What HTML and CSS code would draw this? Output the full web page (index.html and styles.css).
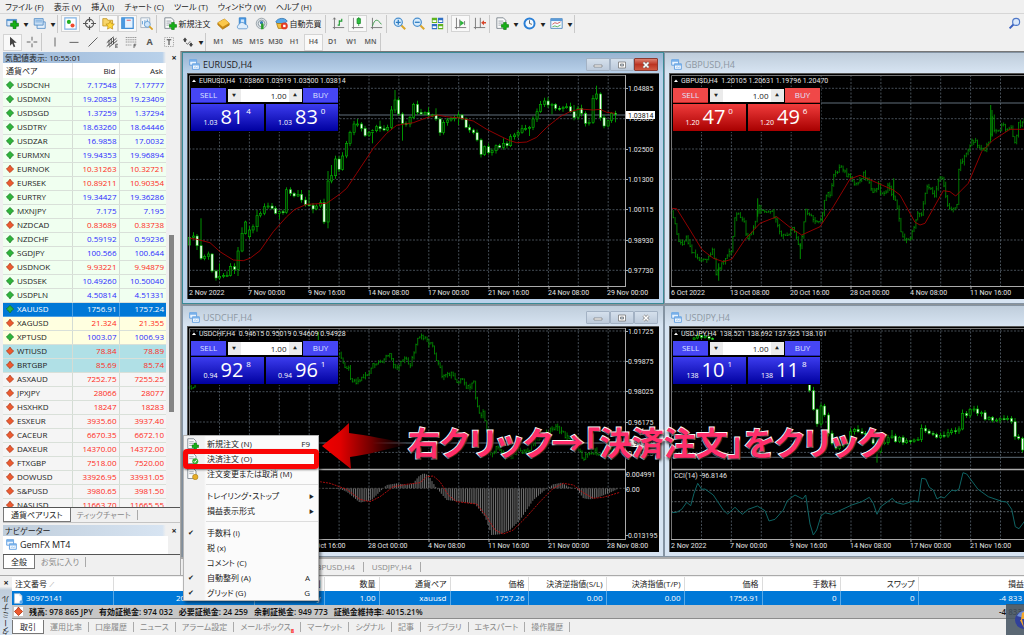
FILE: index.html
```html
<!DOCTYPE html>
<html lang="ja">
<head>
<meta charset="utf-8">
<title>GemFX MT4</title>
<link rel="stylesheet" href="styles.css">
</head>
<body>
<svg class="defs" aria-hidden="true">
  <defs>
    <linearGradient id="g-arrow" x1="0" x2="1" y1="0" y2="0"><stop offset="0" stop-color="#f00000"/><stop offset=".22" stop-color="#e00000"/><stop offset=".6" stop-color="#6c0000"/><stop offset="1" stop-color="#200" stop-opacity=".2"/></linearGradient>
    <symbol id="plus" viewBox="0 0 8 8"><path d="M2.7.5h2.6v2.2h2.2v2.6H5.3v2.2H2.7V5.3H.5V2.7h2.2z" fill="#16b016" stroke="#0a760a" stroke-width=".6"/></symbol>
    <symbol id="i-newchart" viewBox="0 0 16 16"><path d="M1 3h12v8H1z" fill="#dcebfa" stroke="#3a78b8"/><path d="M1 3h12v2H1z" fill="#5b9bd8"/><use href="#plus" x="5" y="4" width="11" height="11"/></symbol>
    <symbol id="i-profiles" viewBox="0 0 16 16"><path d="M5 6h10v8H5z" fill="#e6f1fc" stroke="#4b88c4"/><path d="M1.500 2h11v8h-11z" fill="#c8def4" stroke="#4b88c4"/><path d="M3 4h8M3 6h8" stroke="#6fa4d8"/></symbol>
    <symbol id="i-watch" viewBox="0 0 16 16"><path d="M1 1h14v14H1z" fill="#fff" stroke="#7fb2e4" stroke-width="1.400"/><circle cx="6" cy="6" r="2.500" fill="#22b022"/><circle cx="10.500" cy="10.500" r="2.500" fill="#ef4a2e"/></symbol>
    <symbol id="i-target" viewBox="0 0 16 16"><circle cx="8" cy="8" r="5" fill="none" stroke="#555" stroke-width="1.400"/><path d="M8 0v6M8 10v6M0 8h6M10 8h6" stroke="#555" stroke-width="1.400"/></symbol>
    <symbol id="i-nav" viewBox="0 0 16 16"><path d="M1 2h5l1 2h6v7H1z" fill="#f7d56a" stroke="#c49520"/><path d="M10 5l1.600 3.300 3.600.5-2.600 2.500.6 3.600L10 13.200 6.800 14.900l.6-3.600L4.800 8.800l3.600-.5z" fill="#ffd83c" stroke="#b98a10" stroke-width=".8"/></symbol>
    <symbol id="i-panel" viewBox="0 0 16 16"><path d="M1 1h14v13H1z" fill="#e5f2ff" stroke="#3f8dd6" stroke-width="1.500"/><path d="M1 1h4v13H1z" fill="#4a98e0"/><path d="M7 4h5" stroke="#e03c3c"/></symbol>
    <symbol id="i-tester" viewBox="0 0 16 16"><path d="M1 1h11v12H1z" fill="#f2f6fa" stroke="#9aa8b8"/><path d="M3 9V5M6 11V4M9 8V3" stroke="#4a90d0"/><circle cx="9" cy="9" r="3.600" fill="#cfe6fb" stroke="#5a96cc"/><path d="M11.500 11.500l4 4" stroke="#d8a020" stroke-width="2"/></symbol>
    <symbol id="i-order" viewBox="0 0 16 16"><path d="M1 1h8l3 3v10H1z" fill="#fbfbfb" stroke="#6c7680"/><path d="M3 5h6M3 7.500h6M3 10h4" stroke="#8a949e"/><use href="#plus" x="6" y="6" width="10" height="10"/></symbol>
    <symbol id="i-close" viewBox="0 0 16 16"><path d="M1 1h8l3 3v10H1z" fill="#fbfbfb" stroke="#6c7680"/><path d="M3 5h6M3 7.500h6" stroke="#8a949e"/><circle cx="11" cy="11" r="4" fill="#35b035"/><path d="M9 11l1.500 1.600L13.200 9" stroke="#fff" fill="none" stroke-width="1.300"/></symbol>
    <symbol id="i-modify" viewBox="0 0 16 16"><path d="M1 1h8l3 3v10H1z" fill="#fbfbfb" stroke="#6c7680"/><path d="M3 5h6M3 7.500h6" stroke="#8a949e"/><circle cx="11" cy="12" r="3.600" fill="#e8ae28" stroke="#9c7210" stroke-width=".7"/></symbol>
    <symbol id="i-gold" viewBox="0 0 16 16"><path d="M1 7l8-4.500 6 5v2.500l-8 5-6-5.500z" fill="#c98a14" stroke="#a9720c" stroke-width=".8"/><path d="M1 7l8-4.500 6 5L7 12z" fill="#fbc84c"/></symbol>
    <symbol id="i-cloud" viewBox="0 0 16 16"><path d="M4 1h8v8H4z" fill="#4a9be8" stroke="#2f7bc4"/><path d="M6 3h4v4H6z" fill="#cfe6fb"/><path d="M3 14.500a2.800 2.800 0 01.5-5A4 4 0 0111 9a3 3 0 012 5.500z" fill="#dfeefc" stroke="#5b94cc"/></symbol>
    <symbol id="i-signal" viewBox="0 0 16 16"><circle cx="8" cy="8" r="6.500" fill="#d8dde2" stroke="#8d979f"/><circle cx="8" cy="8" r="4" fill="#eef1f3" stroke="#7c8c94"/><circle cx="8" cy="7" r="2" fill="#3878b0"/><path d="M9 8v7" stroke="#28a028" stroke-width="3"/></symbol>
    <symbol id="i-auto" viewBox="0 0 16 16"><path d="M1 6c2-5 11-6 14-1l-3 3H3z" fill="#58a8e8" stroke="#2c70ac"/><path d="M2 8l2 6h8V8z" fill="#f2c040" stroke="#a97c12"/><circle cx="11.500" cy="11" r="4.200" fill="#e23a22"/><path d="M10 9.500h3v3h-3z" fill="#fff"/></symbol>
    <symbol id="i-bars" viewBox="0 0 16 16"><path d="M3 1v12h12M1 13h2M3 13v2M1.500 3L3 1l1.500 2" fill="none" stroke="#666"/><path d="M7 10h2V4M9 5h3V2" stroke="#1c9a2c" stroke-width="1.400" fill="none"/></symbol>
    <symbol id="i-candle" viewBox="0 0 16 16"><path d="M3 1v12h12M1 13h2M3 13v2" fill="none" stroke="#666"/><path d="M9.500 0v11" stroke="#1c9a2c"/><path d="M7.500 2h4v6h-4z" fill="#2fc23f" stroke="#148a24"/></symbol>
    <symbol id="i-line" viewBox="0 0 16 16"><path d="M3 1v12h12M1 13h2M3 13v2" fill="none" stroke="#666"/><path d="M3 11c3-9 6-9 11-2" fill="none" stroke="#3d9a4a" stroke-width="1.200"/></symbol>
    <symbol id="i-zin" viewBox="0 0 16 16"><path d="M10 10l5 5" stroke="#dba62a" stroke-width="2.600"/><circle cx="6.500" cy="6.500" r="5" fill="#d7ecfc" stroke="#4a8fce" stroke-width="1.500"/><path d="M6.500 3.500v6M3.500 6.500h6" stroke="#2f7cc0" stroke-width="1.600"/></symbol>
    <symbol id="i-zout" viewBox="0 0 16 16"><path d="M10 10l5 5" stroke="#dba62a" stroke-width="2.600"/><circle cx="6.500" cy="6.500" r="5" fill="#d7ecfc" stroke="#4a8fce" stroke-width="1.500"/><path d="M3.500 6.500h6" stroke="#2f7cc0" stroke-width="1.600"/></symbol>
    <symbol id="i-tile" viewBox="0 0 16 16"><path d="M1 1h6.500v6.500H1zM8.500 8.500H15V15H8.500z" fill="#5fb420"/><path d="M8.500 1H15v6.500H8.500zM1 8.500h6.500V15H1z" fill="#2f6fc4"/><path d="M2 4h4.500v2H2zM9.500 4H14v2H9.500zM2 11.500h4.500v2H2zM9.500 11.500H14v2H9.500z" fill="#fff"/></symbol>
    <symbol id="i-shift" viewBox="0 0 16 16"><path d="M3 1v12h12M1 13h2M3 13v2" fill="none" stroke="#666"/><path d="M7 3v9M13 5v5" stroke="#666"/><path d="M7.500 4l5 3.500-5 3.500z" fill="#2bb03a"/></symbol>
    <symbol id="i-scroll" viewBox="0 0 16 16"><path d="M3 1v12h12M1 13h2M3 13v2M9 1v12" fill="none" stroke="#666"/><path d="M10 7l3.500-3v2H16v2h-2.500v2z" fill="#d8452a"/></symbol>
    <symbol id="i-clock" viewBox="0 0 16 16"><circle cx="8" cy="8" r="6.200" fill="#f4faff" stroke="#2a7fd6" stroke-width="2.400"/><path d="M8 4v4l3 1" stroke="#444" fill="none"/></symbol>
    <symbol id="i-tmpl" viewBox="0 0 16 16"><path d="M1 2h14v12H1z" fill="#f5faff" stroke="#3f7db8"/><path d="M1 2h14v3H1z" fill="#5b9bd8"/><path d="M3 9l3-2 3 1 4-2" stroke="#c44" fill="none"/><path d="M3 12l3-1 3 1 4-2" stroke="#4a4" fill="none"/></symbol>
    <symbol id="i-cursor" viewBox="0 0 16 16"><path d="M4 1v12l3-3 2 5 2-1-2-5h4z" fill="#444"/></symbol>
    <symbol id="i-cross" viewBox="0 0 16 16"><path d="M8 1v5M8 10v5M1 8h5M10 8h5" stroke="#555" stroke-width="1.200"/></symbol>
    <symbol id="i-vline" viewBox="0 0 16 16"><path d="M8 2v12" stroke="#555" stroke-width="1.200"/></symbol>
    <symbol id="i-h" viewBox="0 0 16 16"><path d="M2 8.500h12" stroke="#555" stroke-width="1.200"/></symbol>
    <symbol id="i-d" viewBox="0 0 16 16"><path d="M2 14L14 2" stroke="#555" stroke-width="1.200"/></symbol>
    <symbol id="i-ch" viewBox="0 0 16 16"><path d="M1 9L10 1M1 14L14 3M4 15L15 6M4 5v8M7 3v8M10 2v9" stroke="#444" stroke-width="1.200"/><path d="M16 11h-3v5h3M13 13.500h2.500" stroke="#444" fill="none"/></symbol>
    <symbol id="i-fib" viewBox="0 0 16 16"><path d="M1 2h14M1 5h14M1 8h14M1 12h8" stroke="#666" stroke-dasharray="1.500 1"/><path d="M15 11h-3v5M12 13h2.500" stroke="#444" fill="none"/></symbol>
    <symbol id="i-label" viewBox="0 0 16 16"><path d="M2 2h12v12H2z" fill="none" stroke="#888" stroke-dasharray="1.500 1.500"/><path d="M5 5h6M8 5v7" stroke="#444" stroke-width="1.400"/></symbol>
    <symbol id="i-arrows" viewBox="0 0 16 16"><path d="M4 2l3 3.500H5.500L5 8H3L2.500 5.500H1z" fill="#444"/><path d="M5 9l2.500 2L11 7" fill="none" stroke="#444"/><path d="M11 9h2l.5 2H15l-3 3.500L9 11h1.500z" fill="#444"/></symbol>
    <symbol id="i-find" viewBox="0 0 16 16"><path d="M7 9l-5 5" stroke="#3a5fc0" stroke-width="2.400"/><circle cx="10" cy="6" r="4.300" fill="#dbe9fb" stroke="#4f78c8" stroke-width="1.400"/></symbol>
    <symbol id="i-win" viewBox="0 0 16 16"><path d="M1 1h10v8H1z" fill="#eaf4ff" stroke="#5a9be0" stroke-width="1.300"/><path d="M1 1h10v3H1z" fill="#78b0ea"/><path d="M5 7h10v8H5z" fill="#f6fbff" stroke="#5a9be0" stroke-width="1.300"/><path d="M5 7h10v2.500H5z" fill="#78b0ea"/><path d="M7 12.500l2-1 2 1 2-1" fill="none" stroke="#78b0ea"/></symbol>
    <symbol id="i-up" viewBox="0 0 10 10"><path d="M5 .5L9.500 5 7.500 7H7L5.500 9.500h-1L3 7h-.5L.5 5z" fill="#2db53a" stroke="#12711c" stroke-width=".9"/></symbol>
    <symbol id="i-dn" viewBox="0 0 10 10"><path d="M5 9.500L9.500 5 7.500 3H7L5.500.5h-1L3 3h-.5L.5 5z" fill="#ec5a30" stroke="#a8300f" stroke-width=".9"/></symbol>
    <symbol id="i-doc" viewBox="0 0 16 16"><path d="M2 1h8l3 3v11H2z" fill="#fff" stroke="#b8c6d4"/><path d="M10 1v3h3" fill="none" stroke="#b8c6d4"/><circle cx="12" cy="13" r="2.500" fill="#5aa8ec"/></symbol>
  </defs>
</svg>

<nav class="menubar">
  <button>ファイル (F)</button><button>表示 (V)</button><button>挿入(I)</button><button>チャート (C)</button><button>ツール (T)</button><button>ウィンドウ (W)</button><button>ヘルプ (H)</button>
</nav>
<div class="toolrow" id="bar1"></div>
<div class="toolrow second" id="bar2"></div>

<main class="work">
  <aside class="side">
    <section class="watch">
      <div class="pane-title"><span>気配値表示: 10:55:01</span><button aria-label="閉じる">×</button></div>
      <div class="watch-body">
        <table class="quotes">
          <thead><tr><th>通貨ペア</th><th>Bid</th><th>Ask</th></tr></thead>
          <tbody id="quotes"></tbody>
        </table>
        <div class="scroll"><div class="thumb"></div></div>
      </div>
      <div class="tabs"><button class="on">通貨ペアリスト</button><button>ティックチャート</button></div>
    </section>
    <section class="navi">
      <div class="pane-title pale"><span>ナビゲーター</span><button aria-label="閉じる">×</button></div>
      <div class="tree"><svg class="ic"><use href="#i-win"/></svg><span>GemFX MT4</span></div>
      <div class="tabs"><button class="on">全般</button><button>お気に入り</button></div>
    </section>
  </aside>
  <section class="mdi">
    <div class="windows" id="windows"></div>
    <div class="charttabs"><button>EURUSD,H4</button><button>USDCHF,H4</button><button>GBPUSD,H4</button><button>USDJPY,H4</button></div>
  </section>
</main>

<section class="terminal">
  <div class="grip"><button aria-label="閉じる">×</button><span>ターミナル</span></div>
  <div class="term-main">
    <table class="orders">
      <colgroup><col class="c-no"><col class="c-time"><col class="c-type"><col class="c-lot"><col class="c-sym"><col class="c-px"><col class="c-px"><col class="c-px"><col class="c-px"><col class="c-px"><col class="c-px"><col></colgroup>
      <thead><tr><th>注文番号 &nbsp;<i>⁄</i></th><th>時間</th><th>取引種別</th><th>数量</th><th>通貨ペア</th><th>価格</th><th>決済逆指値(S/L)</th><th>決済指値(T/P)</th><th>価格</th><th>手数料</th><th>スワップ</th><th class="last">損益</th></tr></thead>
      <tbody><tr><td><svg class="ic"><use href="#i-doc"/></svg>30975141</td><td>2022.11.29 10:54:18</td><td>buy</td><td>1.00</td><td>xauusd</td><td>1757.26</td><td>0.00</td><td>0.00</td><td>1756.91</td><td>0</td><td>0</td><td>-4 833</td></tr></tbody>
    </table>
    <div class="balance"><svg class="bi"><use href="#i-dn"/></svg><span>残高: 978 865 JPY</span><span>有効証拠金: 974 032</span><span>必要証拠金: 24 259</span><span>余剰証拠金: 949 773</span><span>証拠金維持率: 4015.21%</span><b>-4 833</b></div>
    <div class="tabs"><button class="on">取引</button><button>運用比率</button><button>口座履歴</button><button>ニュース</button><button>アラーム設定</button><button>メールボックス<sub>8</sub></button><button>マーケット</button><button>シグナル</button><button>記事</button><button>ライブラリ</button><button>エキスパート</button><button>操作履歴</button></div>
  </div>
</section>

<div class="context" role="menu">
  <button class="item"><svg><use href="#i-order"/></svg><span>新規注文 (N)</span><kbd>F9</kbd></button>
  <button class="item"><svg><use href="#i-close"/></svg><span>決済注文 (O)</span></button>
  <button class="item"><svg><use href="#i-modify"/></svg><span>注文変更または取消 (M)</span></button>
  <hr>
  <button class="item"><i></i><span>トレイリング・ストップ</span><kbd class="sub">▶</kbd></button>
  <button class="item"><i></i><span>損益表示形式</span><kbd class="sub">▶</kbd></button>
  <hr>
  <button class="item"><i>✔</i><span>手数料 (i)</span></button>
  <button class="item"><i></i><span>税 (x)</span></button>
  <button class="item"><i></i><span>コメント (C)</span></button>
  <button class="item"><i>✔</i><span>自動整列 (A)</span><kbd>A</kbd></button>
  <button class="item"><i>✔</i><span>グリッド (G)</span><kbd>G</kbd></button>
  <div class="mark"></div>
</div>
<svg class="pointer" viewBox="0 0 86 48"><path d="M1 24C9 17 19 10 28 1v10c18 2 40 7 57 10v2C66 27 46 33 29 35l1 12C20 39 10 31 1 24z" fill="url(#g-arrow)"/></svg>
<div class="caption">右クリック→「決済注文」をクリック</div>
<div class="badge"><svg viewBox="0 0 18 31"><circle cx="18" cy="16" r="9" fill="#31409a"/><path d="M18 7a9 9 0 00-7 5l7 2z" fill="#6f8fd8"/><path d="M16 9l2-1v7h-2l2 9-4-8h1z" fill="#f6a82a"/></svg></div>
<script src="app.js"></script>
</body>
</html>
```
FILE: styles.css
```css
* { box-sizing: border-box; }
html, body { height: 100%; }
body {
  margin: 0; display: flex; flex-direction: column; position: relative; overflow: hidden;
  background: #f0f0f0; color: #222;
  font-family: "Open Sans", "Noto Sans CJK JP", sans-serif; font-size: 8px; line-height: 12px;
  font-feature-settings: "palt";
}
button, input { font: inherit; font-feature-settings: inherit; color: inherit; margin: 0; padding: 0; border: 0; background: none; border-radius: 0; white-space: nowrap; }
.defs { position: absolute; width: 0; height: 0; }

.menubar { display: flex; gap: 10px; padding: 0 5px; height: 13px; flex: none; }
.toolrow { display: flex; align-items: center; height: 20px; flex: none; border-top: 1px solid #d6d6d6; padding-left: 3px; }
.toolrow.second { height: 18px; border-top: 0; }
.group { display: flex; align-items: center; height: 18px; border-right: 1px solid #c9c9c9; }
.group + .group { padding-left: 3px; }
.tool { width: 19px; height: 17px; display: flex; align-items: center; justify-content: center; flex: none; color: #555; font-weight: 600; font-size: 7px; }
.tool svg { width: 13px; height: 13px; display: block; }
.tool.on { background: #f9f9f9; border: 1px solid #d4d4d4; }
.tool.caret { width: 8px; font-size: 5px; color: #222; }
.tool.wide { width: 54px; font-size: 8px; font-weight: 400; color: #222; gap: 2px; }
.tool.letter { font-size: 9px; font-weight: 700; }
.second .tool svg { width: 12px; height: 12px; }
.search { margin-left: auto; }

.work { flex: 1; min-height: 0; display: flex; }
.side { width: 181px; flex: none; display: flex; flex-direction: column; gap: 2px; padding: 1px 0 6px 3px; border-right: 1px solid #a9a9a9; }
.watch { flex: 1; min-height: 0; display: flex; flex-direction: column; border-bottom: 1px solid #c4c4c4; }
.pane-title { display: flex; justify-content: space-between; align-items: center; height: 11px; flex: none; padding-left: 2px; background: linear-gradient(90deg, #9cb8d8, #b9d1ea 90%, #f0f0f0 92%); line-height: 11px; }
.pane-title.pale { background: linear-gradient(90deg, #bfcddb, #d7e4f2 90%, #f0f0f0 92%); }
.pane-title button { width: 12px; font-weight: 700; font-size: 9px; line-height: 11px; }
.watch-body { flex: 1; min-height: 0; overflow: hidden; display: flex; }
.quotes { width: 163px; border-collapse: collapse; table-layout: fixed; align-self: flex-start; background: #fff; }
.quotes th { height: 15px; padding: 0 3px; text-align: right; font-weight: 400; border-right: 1px solid #e2e2e2; }
.quotes th:first-child { width: 69px; text-align: left; }
.quotes th:last-child, .quotes td:last-child { border-right: 0; }
.quotes td { height: 14px; padding: 0 2px; text-align: right; border-right: 1px solid #d4dcd4; border-bottom: 1px solid #d9e0d9; line-height: 12px; }
.quotes td:first-child { text-align: left; color: #222; }
.quotes svg { width: 8px; height: 8px; margin: 0 3px 0 1px; vertical-align: -1px; }
.quotes tr.up td { color: #2b2bff; }
.quotes tr.dn td { color: #ff2a20; }
.quotes tr.up td:first-child, .quotes tr.dn td:first-child { color: #222; }
.quotes tr.fx { background: #f0fff0; }
.quotes tr.metal { background: #ffffe0; }
.quotes tr.oil { background: #b0e0e6; }
.quotes tr.index { background: #f5f5f5; }
.quotes tr.sel { background: #0078d7; }
.quotes tr.sel td, .quotes tr.sel td:first-child { color: #fff; border-color: #4c9fe4; }
.scroll { width: 12px; padding: 172px 4px 0 3px; background: #f0f0f0; }
.thumb { height: 177px; background: #858585; }
.tabs { display: flex; align-items: center; height: 15px; flex: none; border-top: 1px solid #555; color: #888; }
.tabs button { height: 10px; line-height: 10px; padding: 0 6px; border-right: 1px solid #aaa; }
.tabs button.on { height: 14px; line-height: 13px; padding: 0 7px; background: #fff; color: #222; border: 1px solid #777; border-top: 0; }
.tabs sub { color: #f22; font-weight: 700; font-size: 6px; line-height: 6px; }
.navi { flex: none; }
.navi .tree { height: 18px; background: #fff; margin-right: 12px; display: flex; gap: 3px; padding: 3px 3px; }
.ic { width: 11px; height: 11px; }
.navi .tree span { font-size: 9px; line-height: 11px; }

.mdi { flex: 1; min-width: 0; overflow: hidden; display: flex; flex-direction: column; background: #f0f0f0; border-top: 1px solid #777; }
.windows { display: grid; grid-template-columns: 482px 482px; flex: none; row-gap: 1px; padding-left: 1px; background: #8c9398; border-bottom: 2px solid #aaa; }
.win { border: 1px solid #8493a2; padding: 0 4px 4px; background: #d7e4f2; min-width: 0; }
.win.active { background: #b9d1ea; border-color: #3a8a96; }
.win header { display: flex; align-items: center; gap: 3px; height: 20px; margin: 0 -4px; padding: 3px 5px 0 6px; background: linear-gradient(#bfcddb, #d7e4f2); color: #8d98a3; font-size: 9px; }
.win.active header { background: linear-gradient(#99b4d1, #b9d1ea); color: #222; }
.win header .name { flex: 1; }
.win header button { width: 24px; height: 13px; border: 1px solid #a3b2c4; border-radius: 1px; background: linear-gradient(#d5e0ec, #bccadb); display: flex; align-items: center; justify-content: center; margin-left: -3px; }
.win header button svg { width: 10px; height: 8px; }
.win.active header button.x { background: linear-gradient(#dc8070, #bc3422 50%, #d05a42); border-color: #8d3a30; }
.view { position: relative; background: #000; border-top: 1px solid #555; border-left: 1px solid #555; overflow: hidden; }
.view > svg { display: block; width: 471px; height: 225px; font-size: 7px; fill: #e4e4e4; font-family: Roboto, "Open Sans", sans-serif; }
.deal { position: absolute; left: 2px; top: 13px; width: 149px; display: grid; grid-template-columns: 1fr 1fr; gap: 1px 2px; padding: 1px; background: #000; color: #dfe4ff; }
.deal .top { grid-column: 1 / 3; display: flex; justify-content: space-between; height: 15px; }
.deal .side-btn { width: 35px; background: #4646f4; border-bottom: 1px solid #2424b8; font-size: 8px; }
.deal .vol { display: flex; width: 74px; height: 13px; margin-top: 1px; background: #fff; color: #222; }
.deal .vol button { width: 13px; background: #ebebeb; font-size: 4px; }
.deal .vol input { flex: 1; min-width: 0; width: 20px; text-align: right; font-size: 8px; padding-right: 2px; }
.deal .price { height: 27px; display: flex; justify-content: center; align-items: flex-end; gap: 3px; background: linear-gradient(#3c3cee, #0000a0); padding-bottom: 4px; line-height: 9px; color: #fff; font-size: 7px; }
.deal .price b { font-weight: 400; font-size: 20px; line-height: 20px; align-self: center; margin-top: 2px; }
.deal .price sup { align-self: flex-start; font-size: 8px; line-height: 14px; }
.deal.red .side-btn { background: #f04848; border-color: #c02424; }
.deal.red .price { background: linear-gradient(#f03c3c, #a80000); }
.charttabs { display: flex; align-items: center; flex: 1; color: #888; }
.charttabs button { height: 10px; line-height: 10px; padding: 0 8px; border-right: 1px solid #aaa; }

.terminal { flex: none; display: flex; height: 60px; border-top: 1px solid #aaa; }
.grip { width: 12px; display: flex; flex-direction: column; align-items: center; overflow: hidden; background: linear-gradient(#f0f0f0 18%, #bfcddb 24%, #d7e4f2); }
.grip button { height: 14px; font-size: 9px; line-height: 9px; font-weight: 700; }
.grip span { writing-mode: vertical-rl; transform: rotate(180deg); line-height: 12px; margin-top: 6px; white-space: nowrap; }
.term-main { flex: 1; min-width: 0; overflow: hidden; padding-top: 1px; }
.orders { width: 100%; border-collapse: collapse; table-layout: fixed; background: #fff; }
.orders th, .orders td { height: 14px; padding: 0 3px; text-align: right; font-weight: 400; white-space: nowrap; border-right: 1px solid #dcdcdc; }
.orders th:first-child, .orders td:first-child { text-align: left; }
.orders th i { color: #aaa; }
.orders th.last { padding-right: 0; }
.orders td { background: #0078d7; color: #fff; border-color: #5aa9e6; }
.orders td svg { vertical-align: -3px; margin: 0 2px 0 -2px; }
.orders th:last-child, .orders td:last-child { border-right: 0; }
.orders td:last-child { padding-right: 2px; }
.c-no { width: 101px; } .c-time { width: 141px; } .c-type { width: 70px; } .c-lot { width: 55px; } .c-sym { width: 71px; } .c-px { width: 78px; }
.balance { display: flex; align-items: center; gap: 6px; height: 14px; padding: 0 2px; background: #c6c6c6; border-bottom: 1px solid #8c8c8c; font-weight: 600; color: #111; white-space: nowrap; }
.balance .bi { width: 9px; height: 9px; background: #fff; }
.balance b { margin-left: auto; font-weight: 600; }
.terminal .tabs { border-top: 0; height: 16px; }

.context { position: absolute; left: 183px; top: 435px; width: 136px; border: 1px solid #b4b4b4; background: linear-gradient(90deg, #f1f1f1 20px, #fbfbfb 22px); box-shadow: 2px 2px 3px rgba(0, 0, 0, .5); }
.item { display: flex; align-items: center; width: 100%; height: 15px; text-align: left; padding-right: 8px; font-size: 8px; }
.item svg { width: 12px; height: 12px; margin: 0 8px 0 3px; flex: none; }
.item i { width: 15px; margin-right: 8px; padding-left: 4px; font-style: normal; font-size: 7px; font-family: "DejaVu Sans", sans-serif; flex: none; }
.item span { flex: 1; }
.item kbd { font: inherit; }
.item kbd.sub { font-size: 5px; margin-right: -4px; }
.context hr { height: 1px; margin: 3px 0 3px 22px; border: 0; background: #ddd; }
.mark { position: absolute; left: -1px; top: 13px; width: 136px; height: 20px; border: 5px solid #fa0505; border-radius: 4px; box-shadow: 0 1px 2px rgba(0, 0, 0, .5); }
.pointer { position: absolute; left: 321px; top: 422px; width: 86px; height: 48px; }
.caption { position: absolute; left: 408px; top: 423px; white-space: nowrap; font-size: 32px; line-height: 36px; font-weight: 700; color: #ff2d6b; -webkit-text-stroke: 2px #fff; paint-order: stroke fill; text-shadow: 1px 2px 3px #000; font-family: "Noto Sans CJK JP", sans-serif; }
.badge { position: absolute; right: 0; bottom: 0; width: 18px; height: 31px; background: rgba(70, 84, 98, .88); }
.badge svg { display: block; width: 18px; height: 31px; }
```
FILE: app.js
```js
const svgUse = id => `<svg><use href="#i-${id}"/></svg>`;

/* Toolbars: "|" ends a group, "v" is a drop-down caret, a leading "+" marks a pressed button. */
function tools(list) {
  return list.split("|").map(g => `<div class="group">` + g.trim().split(/\s+/).map(t => {
    if (t === "v") return `<button class="tool caret" aria-label="メニュー">▼</button>`;
    const on = t[0] === "+" ? " on" : "";
    t = t.replace("+", "");
    if (t.includes(":")) {
      const [icon, label] = t.split(":");
      return `<button class="tool wide">${svgUse(icon)}${label}</button>`;
    }
    if (t === "A") return `<button class="tool letter">A</button>`;
    if (/^[A-Z]/.test(t)) return `<button class="tool${on}">${t}</button>`;
    return `<button class="tool${on}" aria-label="${t}">${svgUse(t)}</button>`;
  }).join("") + `</div>`).join("");
}
document.getElementById("bar1").innerHTML =
  tools("newchart v profiles v|+watch target +nav +panel tester|order:新規注文 gold cloud signal auto:自動売買|bars +candle line|zin zout tile|+shift scroll|order v clock v tmpl v") +
  `<button class="tool search" aria-label="検索">${svgUse("find")}</button>`;
document.getElementById("bar2").innerHTML =
  tools("+cursor cross|vline h d ch fib A label arrows v|M1 M5 M15 M30 H1 +H4 D1 W1 MN");

const quotes = `USDCNH 7.17548 7.17777 up fx
USDMXN 19.20853 19.23409 up fx
USDSGD 1.37259 1.37294 up fx
USDTRY 18.63260 18.64446 up fx
USDZAR 16.9858 17.0032 up fx
EURMXN 19.94353 19.96894 up fx
EURNOK 10.31263 10.32721 dn fx
EURSEK 10.89211 10.90354 dn fx
EURTRY 19.34427 19.36286 up fx
MXNJPY 7.175 7.195 up fx
NZDCAD 0.83689 0.83738 dn fx
NZDCHF 0.59192 0.59236 up fx
SGDJPY 100.566 100.644 up fx
USDNOK 9.93221 9.94879 dn fx
USDSEK 10.49260 10.50040 up fx
USDPLN 4.50814 4.51331 up fx
XAUUSD 1756.91 1757.24 up sel
XAGUSD 21.324 21.355 dn metal
XPTUSD 1003.07 1006.93 up metal
WTIUSD 78.84 78.89 dn oil
BRTGBP 85.69 85.74 dn oil
ASXAUD 7252.75 7255.25 dn index
JPXJPY 28066 28077 dn index
HSXHKD 18247 18283 dn index
ESXEUR 3935.60 3937.40 dn index
CACEUR 6670.35 6672.10 dn index
DAXEUR 14370.00 14372.00 dn index
FTXGBP 7518.00 7520.00 dn index
DOWUSD 33926.95 33931.05 dn index
S&amp;PUSD 3980.65 3981.50 dn index
NASUSD 11663.70 11665.55 dn index`;
document.getElementById("quotes").innerHTML = quotes.split("\n").map(l => {
  const [s, b, a, d, k] = l.split(" ");
  return `<tr class="${d} ${k}"><td>${svgUse(d)}${s}</td><td>${b}</td><td>${a}</td></tr>`;
}).join("");

/* Chart data is kept in thirds of a pixel; ox/oy shift it into the plot. */
const pairs = s => s.trim().split(/\s+/).map(p => p.split(",").map(Number));
const lerp = (pts, x) => {
  for (let i = 1; i < pts.length; i++) if (x <= pts[i][0]) {
    const [x0, y0] = pts[i - 1], [x1, y1] = pts[i];
    return y0 + (y1 - y0) * (x - x0) / (x1 - x0);
  }
  return pts[pts.length - 1][1];
};
const noise = i => { const v = Math.sin(i * 12.9898) * 43758.5453; return v - Math.floor(v); };
const line = (x1, y1, x2, y2, c, extra = "") => `<line x1="${x1.toFixed(1)}" y1="${y1.toFixed(1)}" x2="${x2.toFixed(1)}" y2="${y2.toFixed(1)}" stroke="${c}" ${extra}/>`;
const poly = (c, s, color, extra = "") => `<polyline fill="none" stroke="${color}" ${extra} points="${pairs(s).map(([x, y]) => (x / 3 - c.ox).toFixed(1) + "," + (y / 3 - c.oy).toFixed(1)).join(" ")}"/>`;

function candles(c, data, x0, open) {
  let out = "", prev = open;
  data.trim().split(/\s+/).forEach((t, i) => {
    const [cl, hi, lo, op] = t.split(",").map(v => v === "" || v === undefined ? NaN : +v);
    const o = op >= 0 ? op : prev, a = Math.min(o, cl), b = Math.max(o, cl);
    const x = Math.round(((x0 + i * 11.2) / 3 - c.ox) * 2) / 2;
    const top = (hi >= 0 ? hi : a - 3 - 9 * noise(i)) / 3 - c.oy;
    const bot = (lo >= 0 ? lo : b + 3 + 7 * noise(i + 50)) / 3 - c.oy;
    out += line(x, top, x, bot, "#00a400", `stroke-width=".9"`);
    out += `<rect x="${x - 1}" y="${(a / 3 - c.oy).toFixed(1)}" width="2.200" height="${Math.max(1, (b - a) / 3).toFixed(1)}" fill="${cl > o ? "#f4fff4" : "#002c00"}" stroke="#00b800" stroke-width=".6"/>`;
    prev = cl;
  });
  return out;
}
function bars(c) {
  let out = "";
  c.bars.split(";").forEach(seg => {
    const pts = pairs(seg), end = pts[pts.length - 1][0];
    let prev = pts[0][1];
    for (let x = pts[0][0], i = 0; x <= end; x += 5.6, i++) {
      const y = lerp(pts, x) + 16 * (noise(i + 7) - .5);
      const hi = Math.min(prev, y) - 1 - 13 * noise(i) * noise(i + 31), lo = Math.max(prev, y) + 1 + 13 * noise(i + 90) * noise(i + 61);
      const px = x / 3 - c.ox;
      out += line(px, hi / 3 - c.oy, px, lo / 3 - c.oy, "#009400", `stroke-width=".8"`);
      out += line(px, y / 3 - c.oy, px + 1, y / 3 - c.oy, "#00a000", `stroke-width=".8"`);
      prev = y;
    }
  });
  (c.spikes ? pairs(c.spikes) : []).forEach(([x, a, b]) => out += line(x / 3 - c.ox, a / 3 - c.oy, x / 3 - c.ox, b / 3 - c.oy, "#009000"));
  return out;
}

function plot(c) {
  const split = c.sub, axis = 212, x0 = 1, x1 = 437, right = c.cut ? 471 : x1;
  let s = "";
  const dash = `stroke-dasharray="2 1.500" stroke-width=".8"`;
  for (let i = 0; i < 14; i++) {
    const x = 31.500 + i * 29.9;
    s += line(x, 1, x, axis, "#56616b", dash);
  }
  (split ? [4, 34.3, 64.7, 95, 125.400] : [14.300, 44.700, 75, 105.400, 135.700, 166, 196.300]).forEach(y => s += line(x0, y, right, y, "#56616b", dash));
  s += line(x0, c.bid, right, c.bid, "#6c7a88", `stroke-width=".9"`);
  s += c.extra ? candles(c, c.extra, 102, 118) : "";
  s += c.candles ? candles(c, c.candles, c.x0, c.open) : "";
  s += c.bars ? bars(c) : "";
  s += c.ma ? poly(c, c.ma, "#a00000", `stroke-width=".9"`) : "";
  if (c.macd) {
    const pts = pairs(c.macd), z = 565 / 3 - c.oy;
    for (let x = pts[0][0]; x < pts[pts.length - 1][0]; x += 5.6) s += line(x / 3 - c.ox, z, x / 3 - c.ox, lerp(pts, x) / 3 - c.oy, "#8c8c8c", `stroke-width=".8"`);
    s += line(x0, z, x1, z, "#555", dash) + poly(c, c.signal, "#c01010", `stroke-dasharray="2 1" stroke-width=".9"`);
  }
  if (c.cci) {
    [163.3, 174.700, 184.700].forEach(y => s += line(x0, y, right, y, "#707880", dash));
    s += poly(c, c.cci, "#0f6464", `stroke-width="1"`) + `<text x="4" y="151">CCI(14) -96.8146</text>`;
  }
  s += `<path d="M${x0}.5 212.500V1.500H${right}.5" fill="none" stroke="#777"/>` + line(x0, 212.500, right, 212.500, "#aaa");
  if (!c.cut) s += line(437.500, 1, 437.500, 213, "#aaa");
  if (split) s += line(x0, 142.500, right, 142.500, "#aaa", `stroke-width="1.500"`);
  c.dates.forEach(([x, t]) => s += `<text x="${x}" y="221">${t}</text>` + (x > 2 ? line(x + 1, 213, x + 1, 215, "#aaa") : ""));
  (c.prices || []).forEach(([y, t]) => s += `<text x="${y > 143 && split ? 438 : 440}" y="${y}">${t}</text>` + line(438, y - 2.500, 440, y - 2.500, "#aaa"));
  if (c.now) s += `<rect x="438" y="${c.bid - 4}" width="29" height="8" fill="#fff"/><text x="440" y="${c.bid + 3}" fill="#111">${c.now}</text>`;
  s += `<path d="M4 8l2-2.500 2 2.500z" fill="#fff"/><text x="11" y="9">${c.title}</text>`;
  return `<svg role="img" aria-label="${c.name}">${s}</svg>`;
}

const charts = [
  { name: "EURUSD,H4", active: true, title: "EURUSD,H4&#160; 1.03860 1.03919 1.03500 1.03814", ox: 8, oy: 24, x0: 29, open: 585, bid: 41, now: "1.03814",
    deal: ["1.03", "81", "4", "1.03", "83", "0"],
    candles: `562,555,585 558 587,552,600 625,505,630 620 612 663,610,668 684,,692 680,640,690 677 676 650 658,640,672 603,,678 550,532 516,512 540,,,560 530,,550 497,480,545 490 470 468,458 475 490 485,,507 487 419,412 430,412 438 433,420 450,420 464 466,420 477,,490 468 458 516 393,363,535 377,345,400 327,317 358 318 280 247 222 222,207 235 257 247 242,,280 230 236,212 240 232 180,168 150,120 192 220,,272 222 202 163 187,152 192 187 195,172 195 207,175 248 217 210 206 203 195,185,225 207 232 240 248 270 313 290 308 302 287 292 280,265 287 260 255 247 236 235 232,,258 207 185 163 153,143 165 163,,193 175 176 173 170,160 185,158 203,165 175 190 220 217 145 132,107 203 228 212 190 193,,217`,
    ma: "28,565 50,568 90,578 120,605 160,630 190,632 210,625 240,602 280,545 320,500 345,478 380,463 440,460 480,432 500,415 530,370 580,295 620,250 650,226 700,218 740,203 770,195 800,200 840,204 880,213 920,238 960,258 990,272 1010,278 1040,276 1070,262 1100,232 1140,200 1170,185 1200,177 1240,180 1260,178 1280,187 1305,190",
    dates: [[1, "2 Nov 2022"], [60, "7 Nov 00:00"], [120, "9 Nov 16:00"], [180, "14 Nov 08:00"], [240, "17 Nov 00:00"], [300, "21 Nov 16:00"], [360, "24 Nov 08:00"], [419, "29 Nov 00:00"]],
    prices: [[17, "1.04885"], [47, "1.03685"], [78, "1.02500"], [108, "1.01300"], [138, "1.00115"], [169, "0.98930"], [199, "0.97730"]] },
  { name: "GBPUSD,H4", cut: true, title: "GBPUSD,H4&#160; 1.20105 1.20631 1.19796 1.20470", ox: 10, oy: 24, bid: 29, red: true,
    deal: ["1.20", "47", "0", "1.20", "49", "6"],
    bars: "34,490 45,520 60,585 80,560 95,605 125,635 150,625 160,590 168,670 180,655 200,610 215,600 225,490 250,505 262,575 280,540 295,465 315,490 340,490 360,555 385,560 395,530 420,595 438,480 465,520 485,510 495,430 510,435 522,365 545,355 570,385 590,405 610,370 640,430 655,400 665,435 685,410 700,440 712,470 722,545 740,575 755,555 770,495 785,490 795,425 810,405 825,440 835,385 850,395 860,455 875,480 890,475 895,360 915,320 935,270 955,285 975,300 990,270 995,195 1005,245 1030,230 1055,240 1065,285 1075,225 1092,210 1200,190",
    spikes: "293,445,500 992,165,270 996,180,260 176,640,692 421,580,627 701,385,450",
    ma: "34,475 50,476 90,540 125,598 160,625 190,635 215,628 255,568 300,520 350,500 390,532 425,555 480,530 520,470 570,387 600,376 650,398 700,420 720,435 765,517 780,525 795,520 850,422 870,425 887,438 925,400 965,305 1000,270 1050,238 1100,238",
    dates: [[1, "6 Oct 2022"], [60, "13 Oct 08:00"], [120, "20 Oct 16:00"], [180, "28 Oct 00:00"], [240, "4 Nov 08:00"], [300, "11 Nov 16:00"]] },
  { name: "USDCHF,H4", title: "USDCHF,H4&#160; 0.94615 0.95019 0.94609 0.94928", ox: 8, oy: 27, sub: true, bid: 116, now: "0.94928",
    deal: ["0.94", "92", "8", "0.94", "96", "1"],
    bars: "28,265 35,270 45,250;478,165 490,190 505,205 515,240 535,245 555,225 570,220 580,190 590,200 610,175 630,165 650,205 670,170 690,195 700,165 715,115 735,110 745,125 755,130 770,190 775,195 790,235 815,220 830,250 845,240 860,265 882,250 888,300 900,355 910,340 920,390 930,460 955,440 985,480 1010,450 1040,455 1060,430 1080,415 1120,380 1150,400 1170,420 1185,415 1200,460 1210,475 1230,455 1270,460 1310,445",
    spikes: "415,95,120",
    macd: "420,565 480,567 500,575 540,608 575,600 600,575 620,555 650,550 680,555 700,550 715,530 730,520 745,525 760,550 770,565 800,600 840,605 885,612 915,650 935,705 960,703 990,690 1020,660 1060,600 1095,570 1120,553 1145,548 1165,560 1190,567 1210,595 1230,598 1260,590 1290,578 1315,566",
    signal: "420,545 450,550 500,568 540,598 570,605 600,590 640,560 680,553 720,548 740,530 760,528 780,545 805,585 830,605 890,612 920,650 945,690 970,702 1000,690 1040,650 1080,605 1120,565 1150,550 1180,555 1210,578 1240,595 1270,592 1320,577",
    dates: [[1, "6 Oct 2022"], [60, "13 Oct 08:00"], [118, "20 Oct 16:00"], [180, "28 Oct 00:00"], [240, "4 Nov 08:00"], [300, "11 Nov 16:00"], [360, "21 Nov 00:00"], [419, "28 Nov 08:00"]],
    prices: [[7, "1.01725"], [37, "0.99875"], [67, "0.98025"], [98, "0.96175"], [129, "0.94325"], [150, "0.004991"], [165, "0.00"], [211, "-0.013195"]] },
  { name: "USDJPY,H4", cut: true, title: "USDJPY,H4&#160; 138.521 138.692 137.925 138.101", ox: 10, oy: 27, sub: true, bid: 130.300, x0: 449, open: 235,
    deal: ["138", "10", "1", "138", "11", "8"],
    candles: "272,230 328 372 318 345 400 430 445 438 432 430 395 388 395 400 402 400 430 455,400,488 430 428 413 408,390 425 412 428 422 424 420 418 385 393 400 403 412 406 408 398 392 393 387 340 347 328 327 340 338 358 352 361 360 356 358 355 365 410 415 450 440",
    extra: "114,111,119 106,101,118 112,104,117 110,105,116 115,108,120 118,112,121",
    cci: "34,638 50,637 65,628 80,607 92,617 102,580 113,550 125,568 135,567 160,585 190,630 203,642 225,622 247,643 265,628 292,618 315,632 327,663 345,658 370,630 382,602 405,585 428,597 437,585 450,672 460,705 470,690 483,648 495,638 515,643 575,615 605,605 628,592 640,610 651,643 662,620 697,595 707,607 730,613 763,602 775,606 785,535 797,537 808,562 820,570 831,597 842,590 853,594 876,570 887,573 897,567 909,518 920,522 954,568 985,590 1025,604 1040,606 1055,628 1066,680 1077,686 1100,655",
    dates: [[1, "2 Nov 2022"], [60, "7 Nov 00:00"], [120, "9 Nov 16:00"], [180, "14 Nov 08:00"], [240, "17 Nov 00:00"], [300, "21 Nov 16:00"]] }
];

document.getElementById("windows").innerHTML = charts.map(c => {
  const d = c.deal;
  return `<section class="win${c.active ? " active" : ""}">
  <header><svg class="ic"><use href="#i-win"/></svg><span class="name">${c.name}</span>
  <button aria-label="最小化"><svg viewBox="0 0 10 8"><path d="M1 4h8v2H1z" fill="#fff" stroke="#777" stroke-width=".7"/></svg></button>
  <button aria-label="元に戻す"><svg viewBox="0 0 10 8"><path d="M1.500 1h7v6h-7z" fill="#fff" stroke="#777" stroke-width=".8"/><path d="M3.500 3h3v2h-3z" fill="#bcd" stroke="#777" stroke-width=".8"/></svg></button>
  <button class="x" aria-label="閉じる"><svg viewBox="0 0 10 8"><path d="M2.500 1.500l5 5M7.500 1.500l-5 5" stroke="#777" stroke-width="2.800"/><path d="M2.500 1.500l5 5M7.500 1.500l-5 5" stroke="#fff" stroke-width="1.600"/></svg></button></header>
  <div class="view">${plot(c)}
  <div class="deal${c.red ? " red" : ""}">
    <div class="top"><button class="side-btn">SELL</button><div class="vol"><button aria-label="減らす">▼</button><input type="text" value="1.00" aria-label="数量"><button aria-label="増やす">▲</button></div><button class="side-btn">BUY</button></div>
    <button class="price"><span>${d[0]}</span><b>${d[1]}</b><sup>${d[2]}</sup></button>
    <button class="price"><span>${d[3]}</span><b>${d[4]}</b><sup>${d[5]}</sup></button>
  </div></div></section>`;
}).join("");
```
